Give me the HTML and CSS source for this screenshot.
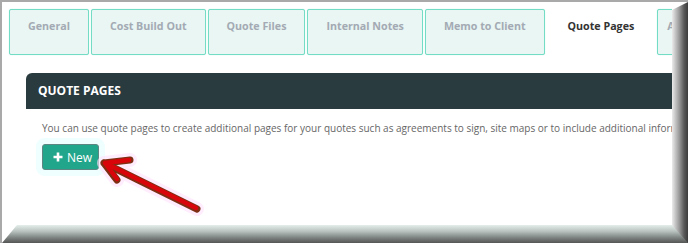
FILE: index.html
```html
<!DOCTYPE html>
<html lang="en">
<head>
  <meta charset="UTF-8" />
  <title>Quote Pages</title>
  <link rel="stylesheet" href="styles.css">
</head>
<body>

  <div class="frame">
    <div class="page">
      <nav class="tabs">
        <span class="tab">General</span>
        <span class="tab">Cost Build Out</span>
        <span class="tab">Quote Files</span>
        <span class="tab">Internal Notes</span>
        <span class="tab">Memo to Client</span>
        <span class="tab active">Quote Pages</span>
        <span class="tab tab-clipped">Assets</span>
      </nav>

      <section class="panel">
        <div class="panel-head">QUOTE PAGES</div>
        <div class="panel-body">
          <p>You can use quote pages to create additional pages for your quotes such as agreements to sign, site maps or to include additional information.</p>
          <button class="btn-new">
            <svg width="10" height="10" viewBox="0 0 10 10"><path d="M5 0.5v9M0.5 5h9" stroke="#fff" stroke-width="2.6"/></svg>
            New
          </button>
        </div>
      </section>
    </div>
    <div class="shade-right"></div>
    <div class="shade-bottom"></div>

    <svg class="arrow" width="688" height="243" viewBox="0 0 688 243">
      <g fill="none" stroke-linecap="round" stroke-linejoin="round">
        <path d="M197 209 L104 163 M104 163 L130 160 M104 163 L117 180" stroke="#ffe0fb" stroke-width="14" opacity="0.6"/>
        <path d="M197 209 L104 163 M104 163 L130 160 M104 163 L117 180" stroke="#7d3014" stroke-width="7"/>
        <path d="M196 208 L105 163 M105 163 L129 160 M105 163 L117 179" stroke="#d8050a" stroke-width="4.5"/>
      </g>
    </svg>
  </div>

</body>
</html>
```

FILE: styles.css
```css
* {
  box-sizing: border-box;
}

body {
  margin: 0;
  font-family: 'Open Sans', sans-serif;
  background-color: #fff;
  color: #333;
}

.frame {
  position: relative;
  width: 688px;
  height: 243px;
  border-top: 2px solid #a9a9a9;
  border-left: 2px solid #a9a9a9;
  display: grid;
  grid-template-columns: 1fr 16px;
  grid-template-rows: 1fr 18px;
  background: #fff;
}

.page {
  grid-column: 1;
  grid-row: 1;
  overflow: hidden;
  padding: 7px 0 0 7px;
}

.tabs {
  display: flex;
  gap: 2px;
  white-space: nowrap;
}

.tab {
  flex: none;
  height: 46px;
  padding: 9px 18px 0;
  line-height: 15px;
  font-size: 10.7px;
  font-weight: 700;
  color: #a3aab3;
  background: #e9f6f4;
  border: 1px solid #74dcc4;
  box-shadow: 0 0 1px #a6efdd;
  border-radius: 2px;
}

.tab.active {
  background: #fff;
  border-color: #fff;
  box-shadow: none;
  color: #333;
  padding: 9px 20px 0;
}

.tab-clipped {
  padding-left: 9px;
}

.panel {
  margin: 18px 0 0 17px;
}

.panel-head {
  height: 36px;
  background: #2a3b40;
  border-radius: 6px 0 0 0;
  color: #fff;
  font-size: 12px;
  font-weight: 700;
  padding: 10px 12px 0;
  line-height: 16px;
  white-space: nowrap;
}

.panel-body {
  padding: 11px 15px 0 16px;
}

.panel-body p {
  margin: 0;
  font-size: 10px;
  line-height: 16px;
  color: #666;
  white-space: nowrap;
}

.btn-new {
  margin-top: 8px;
  width: 57px;
  height: 26px;
  display: flex;
  align-items: center;
  gap: 4px;
  padding: 0 0 0 10px;
  background: #21a68b;
  border: 1px solid #5e8582;
  border-radius: 3px;
  color: #fff;
  font-family: 'Open Sans', sans-serif;
  font-size: 12px;
  box-shadow: 0 0 0 6px #effeff;
}

.shade-right {
  grid-column: 2;
  grid-row: 1 / 3;
  background: linear-gradient(to right, #ebebeb, #9a9a9a 45%, #5a5a5a 75%, #3c3c3c);
  clip-path: polygon(0 8px, 100% 0, 100% 100%, 0 calc(100% - 18px));
  z-index: 2;
}

.shade-bottom {
  grid-column: 1 / 3;
  grid-row: 2;
  background: linear-gradient(to bottom, #e4eeeb, #b9c2bf 35%, #7d8482 70%, #555 100%);
  clip-path: polygon(15px 0, 100% 0, 100% 100%, 0 100%);
}

.arrow {
  position: absolute;
  top: -2px;
  left: -2px;
  z-index: 3;
}
```
